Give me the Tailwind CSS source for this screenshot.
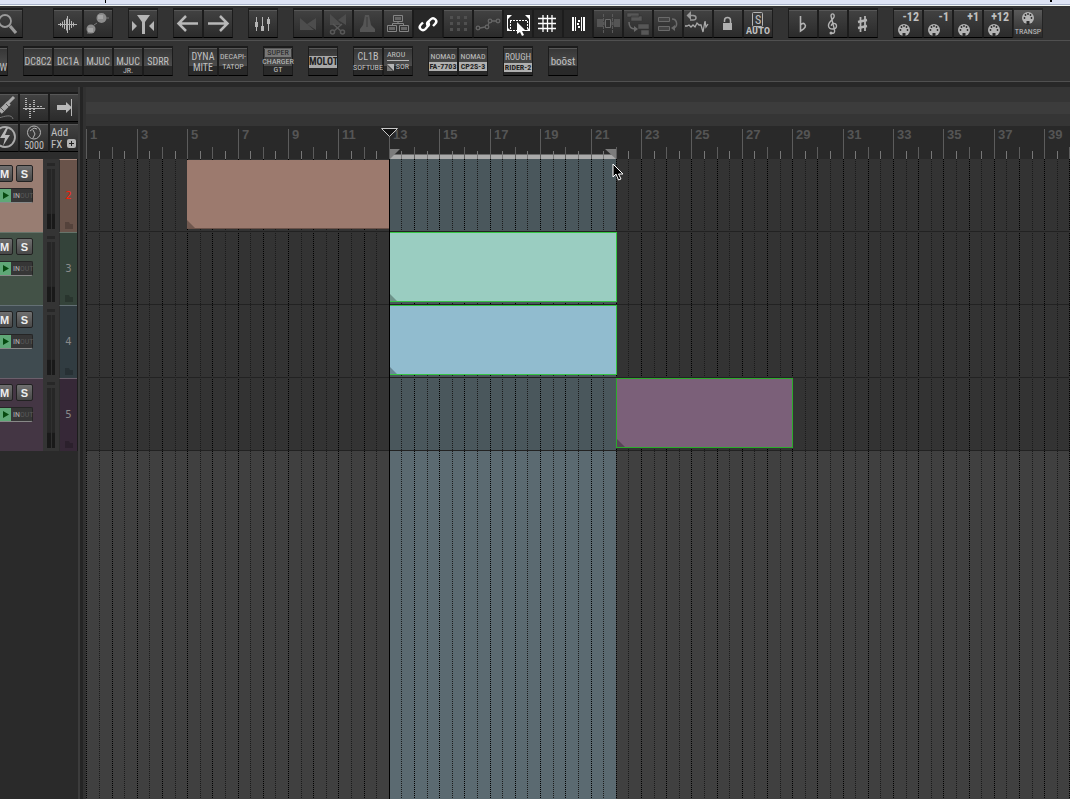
<!DOCTYPE html>
<html lang="en">
  <head>
    <meta charset="UTF-8" />
    <meta name="viewport" content="width=device-width, initial-scale=1.0" />
    <title>Arrange View</title>
    <script src="https://cdn.jsdelivr.net/npm/@tailwindcss/browser@4"></script>
  </head>
  <body class="flex flex-col h-screen overflow-hidden bg-[#333333] font-['Roboto_Condensed','Liberation_Mono',monospace] text-[#c0c0c0]">
    <div class="relative h-[6px] shrink-0 bg-[#dde3f4] border-b border-[#f4f8f4]">
      <div class="absolute inset-x-0 bottom-0 h-px bg-[#a9b3c9]"></div>
      <div class="absolute left-[105px] top-0 w-px h-[3px] bg-black"></div>
      <div class="absolute left-[1050px] top-0 w-[2px] h-[2px] bg-black"></div>
    </div>

    <div class="shrink-0 border-b border-[#505050] pt-[2px] pb-[2px]">
      <div class="flex gap-[15px] -ml-[7px]" id="mainBar"></div>
    </div>
    <div class="shrink-0 border-b border-[#505050] py-[5px]">
      <div class="flex gap-[15px] -ml-[22px]" id="fxBar"></div>
    </div>
    <div class="shrink-0 h-[5px] bg-[#282828]"></div>

    <div class="flex flex-1 min-h-0">
      <div class="flex flex-col w-[78px] shrink-0 overflow-hidden bg-[#2a2a2a]">
        <div class="h-[72px] pt-[5px] bg-[#2c2c2c]">
          <div class="grid grid-cols-[30px_30px_30px] -ml-[11px]" id="panelBar"></div>
        </div>
        <div id="trackPanel"></div>
      </div>
      <div class="w-[8px] shrink-0 flex bg-[#313131]">
        <div class="w-[2px] bg-[#3c3c3c]"></div>
        <div class="w-[3px] bg-[#242424]"></div>
      </div>

      <div class="relative flex flex-col flex-1 min-w-0">
        <div class="h-[15px] bg-[#353535]"></div>
        <div class="h-[12px] bg-[#3c3c3c]"></div>
        <div class="h-[12px] bg-[#353535]"></div>
        <div class="relative h-[33px] bg-[#292929] overflow-hidden" id="ruler"></div>
        <div class="relative flex-1 bg-[#404040] overflow-hidden" id="arrange"></div>
        <svg class="absolute left-[294px] top-[41px]" width="20" height="11" viewBox="0 0 20 11">
          <path d="M1.5 .5h16L9.500 8.500z" fill="#151515" stroke="#c8c8c8" />
        </svg>
        <svg class="absolute left-[526px] top-[76px]" width="13" height="18" viewBox="0 0 13 18">
          <path d="M1 1v13l3-3 2.500 6 2.500-1-2.500-5h4.500z" fill="#000" stroke="#fff" />
        </svg>
      </div>
    </div>

    <script>
      const midi = (x, y) => `
        <circle cx="${x}" cy="${y}" r="6" fill="#b4b4b4"/>
        <g fill="#2b2b2b">
          <path d="M${x - 1.5} ${y + 3}h3v4h-3z"/>
          <circle cx="${x - 3.5}" cy="${y}" r=".9"/><circle cx="${x + 3.5}" cy="${y}" r=".9"/>
          <circle cx="${x - 2.5}" cy="${y - 3}" r=".9"/><circle cx="${x + 2.5}" cy="${y - 3}" r=".9"/>
          <circle cx="${x}" cy="${y - 4}" r=".9"/>
        </g>`;

      const icons = {
        search: `<circle cx="12" cy="13" r="6" fill="none" stroke="#9a9a9a" stroke-width="1.800"/><path d="M17 18l6 7" stroke="#9a9a9a" stroke-width="3.200"/>`,
        wave: `<path d="M5 16.500h19M7.500 15v3M9.500 13.500v6M11.500 12v9M13.500 10.500v12M14.500 8v17M16.500 11v11M18.500 13v7M20.500 14.500v4" stroke="#b4b4b4" fill="none"/>`,
        blobs: `<g fill="#8c8c8c"><circle cx="18.500" cy="10" r="5"/><circle cx="8" cy="21" r="4.500"/></g><path d="M15 7h5v4h-5zM5 20h5v4h-5z" fill="#a4a4a4"/><path d="M23 10h3M11 17l3-2M4 25h3" stroke="#777"/>`,
        trim: `<g fill="#b4b4b4"><path d="M9 7h13l-5 7v12h-3V14z"/><path d="M4 13v10l5-5zM26 13v10l-5-5z"/></g>`,
        left: `<path d="M25 15.500H7M13 8l-7.500 7.500L13 23" fill="none" stroke="#b8b8b8" stroke-width="2.500"/>`,
        right: `<path d="M5 15.500h18M17 8l7.500 7.500L17 23" fill="none" stroke="#b8b8b8" stroke-width="2.500"/>`,
        mixer: `<path d="M8.500 9v14M14.500 9v14M20.500 9v14" stroke="#b4b4b4"/><path d="M7 14h3v5H7zM13 18h3v5h-3zM19 11h3v5h-3z" fill="#b4b4b4"/>`,
        fade: `<path d="M7 10l14 12H7zM23 10v12l-9-6z" fill="#4d4d4d"/>`,
        cut: `<path d="M7 6l12 11H7zM23 6v11l-8-5z" fill="#4d4d4d"/><path d="M10 16l8 7M19 16l-8 7" stroke="#585858" stroke-width="1.500"/><g fill="none" stroke="#585858" stroke-width="1.500"><circle cx="9.500" cy="24" r="2"/><circle cx="19.500" cy="24" r="2"/></g>`,
        metro: `<path d="M12 7h4l2 10 4 4v3H7v-3l3-4z" fill="#555"/><path d="M14 9v10" stroke="#3a3a3a"/>`,
        nodes: `<g fill="none" stroke="#858585"><path d="M10.500 7.500h9v6h-9zM4.500 17.500h9v6h-9zM16.500 17.500h9v6h-9zM15 13v2.500M9.500 17v-1.500h11v2"/></g><path d="M12 9h6v3h-6zM6 19h6v3H6zM18 19h6v3h-6z" fill="#666"/>`,
        link: `<g fill="none" stroke="#fff" stroke-width="2.400"><path d="M15.500 18.500c-2-2-2-3.500 0-5l2-2c1.500-1.500 3.500-1.500 5 0s1 3-.5 4.500L20 18"/><path d="M14.500 13.500c2 2 2 3.500 0 5l-2 2.500c-1.500 1.500-3.500 1.500-5 0s-1-3 .5-4.500L10 14.500"/></g>`,
        dots: `<path d="M7 8h3v3H7zM14 8h3v3h-3zM21 8h3v3h-3zM7 14h3v3H7zM14 14h3v3h-3zM21 14h3v3h-3zM7 20h3v3H7zM14 20h3v3h-3zM21 20h3v3h-3z" fill="#505050"/>`,
        env: `<g fill="none" stroke="#656565" stroke-width="1.300"><circle cx="5" cy="20" r="1.800"/><circle cx="14" cy="19" r="1.800"/><circle cx="17" cy="13" r="1.800"/><circle cx="25" cy="13" r="1.800"/><path d="M7 20l5-1M15 17l1-2M19 13h4"/></g>`,
        select: `<g fill="none" stroke="#fff"><path d="M4.500 7v15M26.500 7v15"/><path d="M7 12.500h18M7 22.500h18M7.500 13v9M24.500 13v9" stroke-dasharray="2 1"/></g><path d="M4 7h5l-5 5zM27 7h-5l5 5zM4 23h4l-4-4zM27 23h-4l4-4z" fill="#fff"/><path d="M14 14v12l3-2 2 4 2-1-2-4h4z" fill="#fff"/>`,
        grid: `<path d="M10 7v17M14.500 7v17M19 7v17M5 10.500h18M5 15.500h18M5 20.500h18" stroke="#fff" stroke-width="1.300"/>`,
        bars: `<path d="M9 9h2v14H9zM12 9h1v14h-1zM15 12h2v2h-2zM15 18h2v2h-2zM14 15h2v2h-2zM18 9h1v14h-1zM20 9h2v14h-2z" fill="#fff"/>`,
        split: `<path d="M4 11h6v8H4zM21 11h6v8h-6z" fill="#555"/><path d="M10 15.500h11" stroke="#4a4a4a" stroke-width="4"/><path d="M12.500 11.500h5v8h-5z" fill="#333" stroke="#6a6a6a"/><path d="M10.500 6v20M19.500 6v20" stroke="#5a5a5a" stroke-dasharray="3 1"/>`,
        cascade: `<path d="M4 5h12v4H4zM8 8h11v5H8zM15 16h11v5H15zM18 22h8v5h-8z" fill="#575757" stroke="#333" stroke-width=".5"/><path d="M6 14c0 5 2 7 6 7" fill="none" stroke="#6a6a6a" stroke-width="1.500"/><path d="M11 18l4 3-4 3z" fill="#6a6a6a"/>`,
        loop: `<path d="M5.500 9.500h11v4h-11zM5.500 18.500h11v4h-11z" fill="#444" stroke="#6a6a6a"/><path d="M19 11c6 0 6 9 1 9" fill="none" stroke="#6a6a6a" stroke-width="1.500"/><path d="M22 17v6l-4-3z" fill="#6a6a6a"/>`,
        undo: `<path d="M6 7.500h4c4 0 4 4.500 0 4.500H7" fill="none" stroke="#9a9a9a" stroke-width="1.500"/><path d="M8 3v9L3.500 7.500z" fill="#9a9a9a"/><path d="M2 18h2l2-1 2 2 2-2 2 2 2-4 2 2 2 0 2 7 2-11 1 6 2-3" fill="none" stroke="#aaa" stroke-width="1.300"/>`,
        lock: `<path d="M10 15h9v7h-9z" fill="#b0b0b0"/><path d="M11.500 14v-1.500a3 3 0 0 1 6 0V15" fill="none" stroke="#b0b0b0" stroke-width="1.500"/>`,
        flat: `<path d="M12.500 8v15c5-3 6-5 4-7-1-1-3 0-4 1" fill="none" stroke="#b4b4b4" stroke-width="1.600"/>`,
        clef: `<path d="M14 25c2 1 3-1 2.500-3L13 8c0-3 4-3 3 1-1 3-6 5-5.500 9 .5 4 8 4 8 0 0-4-6-3-5 0" fill="none" stroke="#b4b4b4" stroke-width="1.400"/><circle cx="13" cy="25" r="1.500" fill="#b4b4b4"/>`,
        sharp: `<path d="M12.500 9v15M17 8v15" stroke="#b4b4b4" stroke-width="1.800"/><path d="M10 14l9-2M10 20l9-2" stroke="#b4b4b4" stroke-width="2.400"/>`,
        midi: midi(11, 22),
        transp: midi(15, 10),
        autoS: `<rect x="9.500" y="4.500" width="10" height="14" rx="1" fill="none" stroke="#b4b4b4"/>`,
        cable: `<path d="M11 20l9-9" stroke="#aaa" stroke-width="5"/><path d="M17 12l3 3M12 16l3 3" stroke="#555"/><path d="M19 11l6-6" stroke="#aaa" stroke-width="3"/><path d="M10 26c6-2 13-4 14 1" fill="none" stroke="#777"/>`,
        spectrum: `<path d="M4 16.500h22" stroke="#b4b4b4"/><g stroke="#b4b4b4" stroke-width="2" fill="none" stroke-dasharray="1 1"><path d="M7 6v10M11 12v4M15 8v8M19 14v2M7 17v2M11 17v9M15 17v3M22 14v2" /></g>`,
        insert: `<path d="M8 13h9v-3l6 5.500-6 5.500v-3H8z" fill="#b8b8b8"/><path d="M22.500 7v17" stroke="#b8b8b8"/>`,
        bolt: `<circle cx="16" cy="15" r="10" fill="none" stroke="#aaa" stroke-width="1.800"/><path d="M17 6l-6 10h5l-2 8 7-11h-5l3-7z" fill="#b8b8b8"/>`,
        knob: `<circle cx="15" cy="10.500" r="6.500" fill="none" stroke="#b4b4b4"/><path d="M11 9l4-3 3 1M14 8l2 4-2 4" fill="none" stroke="#b4b4b4"/>`,
        plus: `<rect x="18" y="17" width="9" height="9" rx="2" fill="#b4b4b4"/><path d="M22.500 19v5M20 21.500h5" stroke="#222"/>`,
      };

      const off = "relative size-[30px] shrink-0 overflow-hidden border border-t-2 border-[#1c1c1c] border-b-black bg-linear-to-b from-[#424242] to-[#2b2b2b] shadow-[inset_0_1px_0_#575757]";
      const on = "relative size-[30px] shrink-0 overflow-hidden border border-t-2 border-[#1c1c1c] bg-[#272727]";
      const lit = "relative size-[30px] shrink-0 overflow-hidden border border-t-2 border-[#242424] bg-linear-to-b from-[#5a5a5a] to-[#2d2d2d]";
      const glossy = "relative size-[30px] shrink-0 flex flex-col items-center justify-center whitespace-nowrap border border-t-2 border-[#1c1c1c] border-b-black bg-linear-to-b from-[#363636] from-0% via-[#4b4b4b] via-65% to-[#292929] to-66% shadow-[inset_0_1px_0_#575757]";

      const button = (icon, label, cls = off, text = "") => `
        <button type="button" class="${cls}" aria-label="${label}">
          <svg class="absolute -left-px -top-[2px]" width="30" height="30" viewBox="0 0 30 30">${icons[icon]}</svg>${text}
        </button>`;
      const shift = (n) =>
        button("midi", "Transpose " + n, off, `<span class="absolute right-[3px] top-px text-[12px] leading-[13px] font-bold">${n}</span>`);
      const group = (items) => `<div class="flex">${items.join("")}</div>`;

      document.getElementById("mainBar").innerHTML = [
        `<div class="flex mr-[15px]">${button("search", "Search")}</div>`,
        group([button("wave", "Waveform"), button("blobs", "Spectral")]),
        group([button("trim", "Trim")]),
        group([button("left", "Back"), button("right", "Forward")]),
        group([button("mixer", "Mixer")]),
        group([
          button("fade", "Crossfade"),
          button("cut", "Split crossfade"),
          button("metro", "Metronome"),
          button("nodes", "Grouping"),
          button("link", "Ripple link", on),
          button("dots", "Dots"),
          button("env", "Envelopes"),
          button("select", "Loop selection", on),
          button("grid", "Grid", on),
          button("bars", "Snap", on),
          button("split", "Split"),
          button("cascade", "Cascade"),
          button("loop", "Loop"),
          button("undo", "Undo"),
          button("lock", "Lock"),
          button("autoS", "Solo auto", off, `<span class="absolute inset-x-0 top-[3px] text-[12px] leading-[14px]">S</span><span class="absolute inset-x-0 top-[17px] text-[10px] leading-[10px] font-bold font-['Liberation_Mono']">AUTO</span>`),
        ]),
        group([button("flat", "Flat"), button("clef", "Clef"), button("sharp", "Sharp")]),
        group([
          shift("-12"), shift("-1"), shift("+1"), shift("+12"),
          button("transp", "Transpose", lit, `<span class="absolute inset-x-0 top-[17px] text-[8px] leading-[10px]">TRANSP</span>`),
        ]),
      ].join("");

      // t10 / t9 / t8 are plain lines, box is a line on a light plate
      const t10 = (s) => `<span class="block text-[10px] leading-[11px]">${s}</span>`;
      const t9 = (s) => `<span class="block text-[9px] leading-[11px]">${s}</span>`;
      const t8 = (s) => `<span class="block text-[8px] leading-[10px]">${s}</span>`;
      const box = (s) => `<span class="block w-full bg-[#b0b0b0] text-[#222222] text-[8px] leading-[9px] font-bold">${s}</span>`;
      const fx = (...lines) => `<button type="button" class="${glossy}">${lines.join("")}</button>`;

      document.getElementById("fxBar").innerHTML = [
        group([fx(`<span class="block self-end text-[10px] leading-[11px] pt-[12px]">W</span>`)]),
        group([fx(t10("DC8C2")), fx(t10("DC1A")), fx(t10("MJUC")), fx(`<span class="block text-[10px] leading-[11px] pt-[7px]">MJUC</span>`, `<span class="block text-[8px] leading-[7px]">JR.</span>`), fx(t10("SDRR"))]),
        group([fx(t10("DYNA"), t10("MITE")), fx(t8("DECAPI-"), t8("TATOP"))]),
        group([fx(`<span class="block px-[2px] bg-[#777777] text-[#222222] text-[8px] leading-[8px]">SUPER</span>`, `<span class="block text-[8px] leading-[9px]">CHARGER</span>`, `<span class="block text-[8px] leading-[8px]">GT</span>`)]),
        group([fx(`<span class="block w-full bg-[#a8a8a8] text-[#222222] text-[10px] leading-[12px] font-bold">MOLOT</span>`)]),
        group([fx(t10("CL1B"), `<span class="block text-[8px] leading-[11px]">SOFTUBE</span>`), fx(`<span class="block w-[22px] border-b border-[#b4b4b4] text-left text-[8px] leading-[10px]">AROU</span>`, `<span class="flex w-[22px] items-center gap-[2px] text-[8px] leading-[12px]"><svg width="7" height="7"><path d="M0 0h7v7z" fill="#b4b4b4"/><path d="M0 1v6h6" fill="#777"/></svg>SOR</span>`)]),
        group([fx(t8("NOMAD"), box("FA-7703")), fx(t8("NOMAD"), box("CP2S-3"))]),
        group([fx(t9("ROUGH"), box("RIDER-2"))]),
        group([fx(`<span class="block text-[11px] leading-[14px]">boōst</span>`)]),
      ].join("");

      document.getElementById("panelBar").innerHTML = [
        button("cable", "Input"),
        button("spectrum", "Spectrum"),
        button("insert", "Insert"),
        button("bolt", "Bypass"),
        button("knob", "Knob", off, `<span class="absolute inset-x-0 top-[17px] text-[10px] leading-[10px]">5000</span>`),
        button("plus", "Add effect", off, `<span class="absolute left-px top-[3px] text-left text-[11px] leading-[12px]">Add<br />FX</span>`),
      ].join("");

      const tracks = [
        { id: 2, main: "bg-[#987d72]", side: "bg-[#69534a]", num: "text-[#ff1c08]", edge: "border-t-[#a88b80]" },
        { id: 3, main: "bg-[#435247]", side: "bg-[#34433a]", num: "text-[#8a8a8a]", edge: "border-t-[#66746a]" },
        { id: 4, main: "bg-[#3f4b50]", side: "bg-[#313c41]", num: "text-[#8a8a8a]", edge: "border-t-[#647075]" },
        { id: 5, main: "bg-[#443644]", side: "bg-[#362837]", num: "text-[#8a8a8a]", edge: "border-t-[#6b5f6b]" },
      ];
      const key = "size-[17px] rounded-[2px] border border-[#222222] bg-linear-to-b from-[#707070] to-[#484848] font-['Liberation_Sans'] text-[11px] leading-[14px] font-bold text-[#eeeeee]";

      document.getElementById("trackPanel").innerHTML = tracks
        .map(
          (t) => `
        <div class="flex h-[73px] border-r border-[#1c1c1c]">
          <div class="w-[43px] pt-[5px] border-t ${t.edge} ${t.main}">
            <div class="flex gap-[3px] -ml-[4px]">
              <button type="button" class="${key}">M</button>
              <button type="button" class="${key}">S</button>
            </div>
            <div class="flex mt-[6px] w-[33px] h-[15px] rounded-r-[2px] border border-l-0 border-[#252525] border-b-[#888888] bg-[#363636]">
              <button type="button" class="w-[11px] bg-[#5fa877]" aria-label="Monitor">
                <svg width="11" height="13" viewBox="0 0 11 13"><path d="M3 3l6 3.500-6 3.500z" fill="#064a10"/></svg>
              </button>
              <span class="pl-[2px] text-[8px] leading-[13px] text-[#b4b4b4]">IN<span class="text-[#585858]">OUT</span></span>
            </div>
          </div>
          <div class="w-[16px] px-[4px] pt-[4px] bg-[#343434]">
            <div class="h-[3px] bg-[#272727]"></div>
            <div class="flex gap-px h-[60px] mt-[3px] bg-[#303030]">
              <div class="flex-1 bg-linear-to-b from-[#262626] from-74% to-[#191919] to-75%"></div>
              <div class="flex-1 bg-linear-to-b from-[#262626] from-74% to-[#191919] to-75%"></div>
            </div>
          </div>
          <div class="relative flex-1 border-t border-l border-l-[#2c2c2c] ${t.edge} ${t.side}">
            <div class="pt-[29px] text-center font-['DejaVu_Sans'] text-[10px] leading-[14px] ${t.num}">${t.id}</div>
            <svg class="absolute left-[5px] bottom-[3px]" width="8" height="7"><path d="M0 0h4l1 2h3v5H0z" fill="#000" opacity=".2"/></svg>
          </div>
        </div>`
        )
        .join("");

      // horizontal position of a bar, in pixels from the start of the timeline
      const barWidth = 25.21;
      const barX = (bar) => Math.round((bar - 1) * barWidth + 0.3);
      const bars = 160;
      const sel = { from: 13, to: 22 };
      const span = (from, to) => `left:${barX(from)}px;width:${barX(to) - barX(from)}px`;

      let ticks = "";
      let lines = "";
      let labels = "";
      for (let b = 1; b < bars; b += 0.5) {
        const x = barX(b) + 0.5;
        const whole = Number.isInteger(b);
        const major = whole && b % 2 === 1;
        ticks += `<line x1="${x}" x2="${x}" y1="${major ? 3 : whole ? 21 : 25}" y2="33" stroke="${whole ? "#5c5c5c" : "#777777"}"/>`;
        lines += `<line x1="${x}" x2="${x}" y1="0" y2="2000" stroke="${whole ? "#000000" : "#1a1a1a"}" stroke-dasharray="1 1"/>`;
        // labels past the window's edge are left out
        if (major && barX(b) < window.innerWidth - 100) {
          labels += `<span class="absolute top-[2px] pl-[4px] font-['Liberation_Sans'] text-[13px] leading-[14px] font-bold text-[#555555]" style="left:${barX(b)}px">${b}</span>`;
        }
      }

      document.getElementById("ruler").innerHTML = `
        ${labels}
        <div class="absolute bottom-0 h-[5px] bg-[#aaaaaa] border-t border-[#6a6a6a]" style="${span(sel.from, sel.to)}"></div>
        <svg class="absolute inset-0 size-full">${ticks}</svg>
        <div class="absolute bottom-0 h-[10px] flex justify-between" style="${span(sel.from, sel.to)}">
          <svg width="11" height="10"><path d="M1 0h10L1 10z" fill="#7c7c7c"/></svg>
          <svg width="11" height="10"><path d="M0 0h11v10z" fill="#7c7c7c"/></svg>
        </div>`;

      const clips = [
        { row: 0, from: 5, to: 13, cls: "top-px h-[69px] bg-[#9c7a6e] border-b border-[#6b5249]" },
        { row: 1, from: 13, to: 22, cls: "top-0 h-[70px] bg-[#9acdc1] border border-l-0 border-[#35c545]" },
        { row: 2, from: 13, to: 22, cls: "top-0 h-[70px] bg-[#91bccf] border border-l-0 border-[#35c545]" },
        { row: 3, from: 22, to: 29, cls: "top-0 h-[70px] bg-[#7b6079] border border-[#2bab2b]" },
      ];
      const clipHtml = (c) => `
        <div class="absolute ${c.cls}" style="left:${barX(c.from)}px;width:${barX(c.to) - barX(c.from) + (c.row ? 1 : 0)}px">
          <svg class="absolute left-0 bottom-0" width="8" height="8"><path d="M0 0v8h8z" fill="#000" opacity=".28"/></svg>
        </div>`;

      document.getElementById("arrange").innerHTML = `
        <div class="absolute inset-y-0 bg-[#5b6a71]" style="${span(sel.from, sel.to)}"></div>
        <div class="relative h-[292px] bg-[#333333]">
          <div class="absolute inset-y-0 bg-[#4a575c]" style="${span(sel.from, sel.to)}"></div>
        </div>
        <svg class="absolute inset-0 size-full">${lines}</svg>
        <div class="absolute inset-x-0 top-0">
          ${tracks
            .map(
              (t, i) => `<div class="relative h-[73px] border-b border-[#222222]">
                ${clips.filter((c) => c.row === i).map(clipHtml).join("")}
              </div>`
            )
            .join("")}
        </div>
        <div class="absolute inset-y-0 w-px bg-black" style="left:${barX(sel.from)}px"></div>`;
    </script>
  </body>
</html>
